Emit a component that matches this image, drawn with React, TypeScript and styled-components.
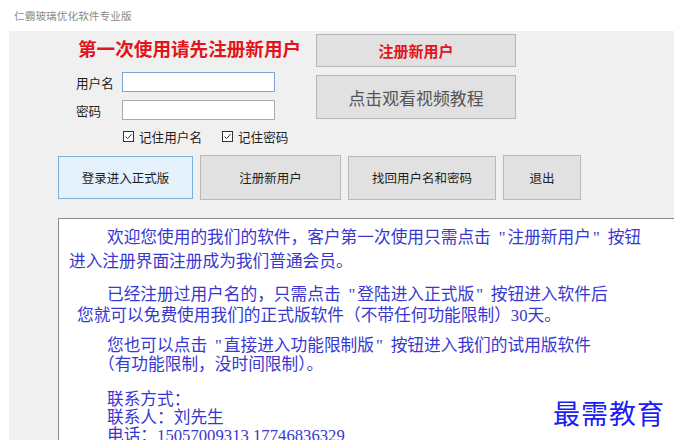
import React from "react";
import styled, { createGlobalStyle } from "styled-components";

const GlobalStyle = createGlobalStyle`
  html, body {
    margin: 0;
    padding: 0;
    background: #ffffff;
    overflow: hidden;
  }
  body {
    width: 674px;
    height: 440px;
    font-family: "Noto Sans CJK SC", "Noto Sans", sans-serif;
  }
`;

const Window = styled.div`
  width: 674px;
  height: 440px;
  display: flex;
  flex-direction: column;
  overflow: hidden;
`;

const TitleBar = styled.div`
  height: 31px;
  padding-left: 14px;
  display: flex;
  align-items: center;
  font-size: 10.7px;
  color: #8a8a8a;
`;

const Panel = styled.div`
  flex: 1;
  margin-left: 9px;
  background: #f0f0f0;
  overflow: hidden;
`;

const TopSection = styled.div`
  height: 124px;
  box-sizing: border-box;
  padding-top: 3px;
  display: flex;
`;

const LoginForm = styled.div`
  width: 240px;
  margin-left: 67px;
  display: flex;
  flex-direction: column;
`;

const Headline = styled.div`
  height: 28px;
  line-height: 28px;
  margin-left: 2px;
  font-size: 18.6px;
  font-weight: 700;
  color: #e3141c;
  white-space: nowrap;
`;

const FieldRow = styled.div<{ $gap: number }>`
  display: flex;
  align-items: center;
  height: 20px;
  margin-top: ${({ $gap }) => $gap}px;
`;

const FieldLabel = styled.label`
  width: 46px;
  font-size: 12.6px;
  color: #1e1e1e;
`;

const TextInput = styled.input<{ $focused?: boolean }>`
  width: 153px;
  height: 20px;
  box-sizing: border-box;
  border: 1px solid ${({ $focused }) => ($focused ? "#7aa7d7" : "#ababab")};
  background: #ffffff;
  padding: 0 3px;
  outline: none;
`;

const CheckRow = styled.div`
  display: flex;
  align-items: center;
  height: 16px;
  margin-top: 8px;
  padding-left: 47px;
  gap: 20px;
`;

const CheckItem = styled.label`
  display: flex;
  align-items: center;
  gap: 5px;
  font-size: 12.6px;
  color: #1e1e1e;
  white-space: nowrap;
`;

const SideButtons = styled.div`
  display: flex;
  flex-direction: column;
  gap: 8px;
  width: 200px;
`;

const SideButton = styled.button<{ $h: number; $accent?: boolean }>`
  height: ${({ $h }) => $h}px;
  width: 200px;
  background: #e1e1e1;
  border: 1px solid #b6b6b6;
  padding: 0;
  font-family: "Noto Sans CJK SC", sans-serif;
  font-size: ${({ $accent }) => ($accent ? "15px" : "16.9px")};
  font-weight: ${({ $accent }) => ($accent ? 700 : 400)};
  color: ${({ $accent }) => ($accent ? "#e3141c" : "#555555")};
`;

const ButtonRow = styled.div`
  display: flex;
  align-items: center;
  gap: 7px;
  height: 45px;
  margin-left: 49px;
`;

const ActionButton = styled.button<{ $w: number; $h: number; $primary?: boolean }>`
  width: ${({ $w }) => $w}px;
  height: ${({ $h }) => $h}px;
  padding: 0;
  background: ${({ $primary }) => ($primary ? "#e5f1fb" : "#e1e1e1")};
  border: 1px solid ${({ $primary }) => ($primary ? "#7ab0dc" : "#b9b9b9")};
  font-family: "Noto Sans CJK SC", sans-serif;
  font-size: 12.5px;
  color: #1e1e1e;
`;

const NoticeBox = styled.div`
  position: relative;
  margin-top: 18px;
  margin-left: 49px;
  width: 640px;
  height: 260px;
  box-sizing: border-box;
  background: #ffffff;
  border: 1px solid #a9a9a9;
  border-top-color: #8c8c8c;
  border-left-color: #8c8c8c;
  padding: 7px 0 0 10px;
  font-family: "Liberation Serif", "Noto Sans CJK SC", serif;
  font-size: 16.7px;
  color: #3838d0;
`;

const Paragraph = styled.div<{ $lh: number; $gap: number }>`
  line-height: ${({ $lh }) => $lh}px;
  margin-top: ${({ $gap }) => $gap}px;
`;

const Line = styled.div<{ $indent: number }>`
  padding-left: ${({ $indent }) => $indent}px;
  white-space: nowrap;
`;

/* full-width quote mark: opening sits right in its cell, closing sits left */
const Quote = styled.span<{ $open?: boolean }>`
  display: inline-block;
  width: 1em;
  box-sizing: border-box;
  text-align: ${({ $open }) => ($open ? "right" : "left")};
  padding: 0 2px;
`;

const Watermark = styled.div`
  position: absolute;
  left: 494px;
  top: 174px;
  font-family: "Noto Sans CJK SC", serif;
  font-size: 27px;
  letter-spacing: 1px;
  color: #1c1cf5;
  white-space: nowrap;
`;

const CheckBox = () => (
  <svg width="11" height="11" viewBox="0 0 11 11">
    <rect x="0.5" y="0.5" width="10" height="10" fill="#ffffff" stroke="#333333" />
    <path d="M2.5 5.5 L4.6 7.6 L8.6 3.2" fill="none" stroke="#333333" strokeWidth="1" />
  </svg>
);

export default function App() {
  return (
    <>
      <GlobalStyle />
      <Window>
        <TitleBar>仁霸玻璃优化软件专业版</TitleBar>
        <Panel>
          <TopSection>
            <LoginForm>
              <Headline>第一次使用请先注册新用户</Headline>
              <FieldRow $gap={10}>
                <FieldLabel>用户名</FieldLabel>
                <TextInput $focused />
              </FieldRow>
              <FieldRow $gap={8}>
                <FieldLabel>密码</FieldLabel>
                <TextInput type="password" />
              </FieldRow>
              <CheckRow>
                <CheckItem>
                  <CheckBox />
                  记住用户名
                </CheckItem>
                <CheckItem>
                  <CheckBox />
                  记住密码
                </CheckItem>
              </CheckRow>
            </LoginForm>
            <SideButtons>
              <SideButton $h={33} $accent>
                注册新用户
              </SideButton>
              <SideButton $h={44}>点击观看视频教程</SideButton>
            </SideButtons>
          </TopSection>

          <ButtonRow>
            <ActionButton $w={135} $h={43} $primary>
              登录进入正式版
            </ActionButton>
            <ActionButton $w={141} $h={45}>
              注册新用户
            </ActionButton>
            <ActionButton $w={148} $h={44}>
              找回用户名和密码
            </ActionButton>
            <ActionButton $w={78} $h={45}>
              退出
            </ActionButton>
          </ButtonRow>

          <NoticeBox>
            <Paragraph $lh={24} $gap={0}>
              <Line $indent={38}>
                欢迎您使用的我们的软件，客户第一次使用只需点击<Quote $open>"</Quote>注册新用户
                <Quote>"</Quote>按钮
              </Line>
              <Line $indent={0}>进入注册界面注册成为我们普通会员。</Line>
            </Paragraph>
            <Paragraph $lh={21} $gap={10}>
              <Line $indent={38}>
                已经注册过用户名的，只需点击<Quote $open>"</Quote>登陆进入正式版<Quote>"</Quote>
                按钮进入软件后
              </Line>
              <Line $indent={8}>
                您就可以免费使用我们的正式版软件（不带任何功能限制）30天。
              </Line>
            </Paragraph>
            <Paragraph $lh={19} $gap={10}>
              <Line $indent={38}>
                您也可以点击<Quote $open>"</Quote>直接进入功能限制版<Quote>"</Quote>
                按钮进入我们的试用版软件
              </Line>
              <Line $indent={29}>（有功能限制，没时间限制）。</Line>
            </Paragraph>
            <Paragraph $lh={18} $gap={17}>
              <Line $indent={38}>联系方式：</Line>
              <Line $indent={38}>联系人：刘先生</Line>
              <Line $indent={38}>电话：15057009313 17746836329</Line>
            </Paragraph>
            <Watermark>最需教育</Watermark>
          </NoticeBox>
        </Panel>
      </Window>
    </>
  );
}
